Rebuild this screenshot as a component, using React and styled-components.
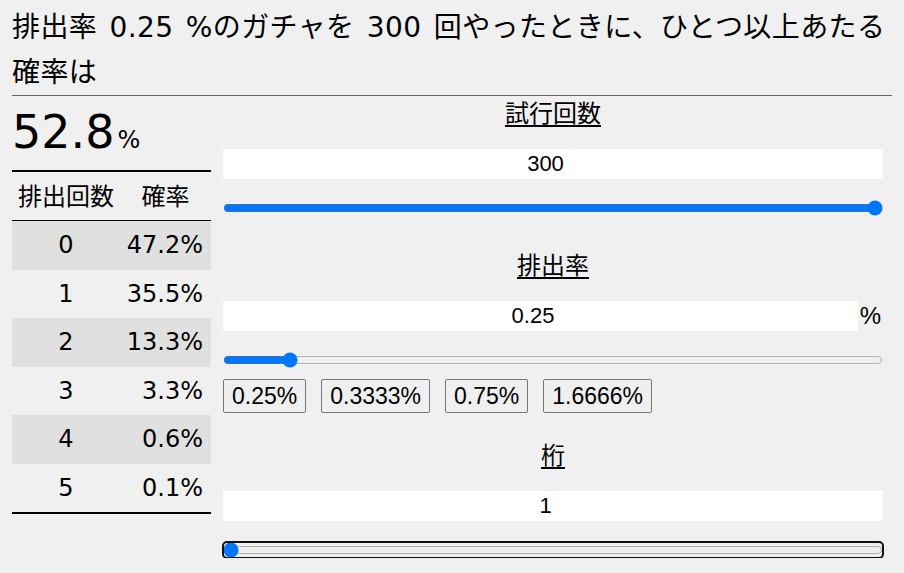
import React, { useState } from 'react';
import styled, { createGlobalStyle } from 'styled-components';

const GlobalStyle = createGlobalStyle`
    body {
        margin: 0;
        background-color: #f0f0f0;
        color: #000;
        font-family: "DejaVu Sans", "Noto Sans CJK JP", sans-serif;
    }
`;

const Page = styled.div`
    padding: 5px 12px 0;
`;

const Title = styled.h1`
    margin: 0;
    font-size: 28px;
    font-weight: normal;
    line-height: 45px;
    letter-spacing: 0.4px;
    word-spacing: 3px;
    white-space: nowrap;
    border-bottom: 1px solid #666;
`;

const Main = styled.div`
    display: flex;
    gap: 12px;
`;

const Left = styled.div`
    width: 199px;
    flex-shrink: 0;
`;

const Big = styled.div`
    margin: 6px 0 8px;
    height: 60px;
    font-size: 46px;
    line-height: 60px;
`;

const BigUnit = styled.span`
    margin-left: 3px;
    font-size: 24px;
`;

const Table = styled.div`
    border-top: 2px solid #000;
    border-bottom: 2px solid #000;
    font-size: 24px;
`;

const HeadRow = styled.div`
    display: grid;
    grid-template-columns: 108px 1fr;
    height: 49px;
    align-items: center;
    padding-bottom: 4px;
    box-sizing: border-box;
    border-bottom: 1px solid #000;
    text-align: center;
`;

const Row = styled.div`
    display: grid;
    grid-template-columns: 108px 1fr;
    height: 48.5px;
    align-items: center;
    background-color: ${({ $shaded }) => ($shaded ? '#e0e0e0' : 'transparent')};
`;

const Count = styled.div`
    text-align: center;
`;

const Rate = styled.div`
    text-align: right;
    padding-right: 8px;
`;

const Right = styled.div`
    width: 660px;
    padding-top: 2px;
`;

const Section = styled.div`
    display: flex;
    flex-direction: column;
    padding-bottom: ${({ $space }) => $space}px;
`;

const Label = styled.label`
    align-self: center;
    font-size: 24px;
    line-height: 32px;
    text-decoration: underline;
    text-decoration-thickness: 2px;
    text-underline-offset: 3px;
`;

const InputRow = styled.div`
    display: flex;
    align-items: center;
    margin-top: 19px;
`;

const NumberInput = styled.input`
    flex: 1;
    min-width: 0;
    height: 30px;
    box-sizing: border-box;
    border: none;
    padding: 0;
    outline: none;
    background-color: #fff;
    text-align: center;
    font-family: "Liberation Sans", Arial, sans-serif;
    font-size: 22px;
    color: #000;
`;

const Unit = styled.span`
    width: 25px;
    text-align: center;
    font-family: "Liberation Sans", Arial, sans-serif;
    font-size: 24px;
`;

const Slider = styled.input`
    display: block;
    width: 100%;
    height: 16px;
    margin: 21px 0 0;
    border-radius: 4px;
    outline: ${({ $focused }) => ($focused ? '2px solid #101010' : 'none')};
    outline-offset: -1px;
`;

const Presets = styled.div`
    display: flex;
    gap: 15px;
    margin-top: 11px;
`;

const Preset = styled.button`
    height: 34px;
    padding: 0 8px;
    border: 1px solid #767676;
    border-radius: 2px;
    background-color: #efefef;
    font-family: "Liberation Sans", Arial, sans-serif;
    font-size: 23px;
    color: #000;
`;

function binom(n, p) {
    // 0..5 回あたる確率
    const rows = [];
    let logC = 0;
    for (let k = 0; k <= 5; k++) {
        if (k > 0) logC += Math.log(n - k + 1) - Math.log(k);
        rows.push(Math.exp(logC + k * Math.log(p) + (n - k) * Math.log(1 - p)));
    }
    return rows;
}

export default function App() {
    const [trials, setTrials] = useState(300);
    const [rate, setRate] = useState(0.25);
    const [digits, setDigits] = useState(1);

    const p = rate / 100;
    const rows = binom(trials, p);
    const atLeastOne = (1 - rows[0]) * 100;
    const fmt = (v) => (v * 100).toFixed(digits) + '%';

    return (
        <Page>
            <GlobalStyle />
            <Title>
                排出率 {rate} %のガチャを {trials} 回やったときに、ひとつ以上あたる<br />確率は
            </Title>
            <Main>
                <Left>
                    <Big>
                        {atLeastOne.toFixed(digits)}
                        <BigUnit>%</BigUnit>
                    </Big>
                    <Table>
                        <HeadRow>
                            <div>排出回数</div>
                            <div>確率</div>
                        </HeadRow>
                        {rows.map((v, i) => (
                            <Row key={i} $shaded={i % 2 === 0}>
                                <Count>{i}</Count>
                                <Rate>{fmt(v)}</Rate>
                            </Row>
                        ))}
                    </Table>
                </Left>
                <Right>
                    <Section $space={34}>
                        <Label htmlFor="trials">試行回数</Label>
                        <InputRow>
                            <NumberInput id="trials" type="number" value={trials} onChange={(e) => setTrials(Number(e.target.value) || 0)} />
                        </InputRow>
                        <Slider type="range" min={1} max={300} value={trials} onChange={(e) => setTrials(Number(e.target.value))} />
                    </Section>
                    <Section $space={27}>
                        <Label htmlFor="rate">排出率</Label>
                        <InputRow>
                            <NumberInput id="rate" type="number" step="0.01" value={rate} onChange={(e) => setRate(Number(e.target.value) || 0)} />
                            <Unit>%</Unit>
                        </InputRow>
                        <Slider type="range" min={0} max={2.75} step={0.01} value={rate} onChange={(e) => setRate(Number(e.target.value))} />
                        <Presets>
                            {['0.25', '0.3333', '0.75', '1.6666'].map((r) => (
                                <Preset key={r} onClick={() => setRate(Number(r))}>{r}%</Preset>
                            ))}
                        </Presets>
                    </Section>
                    <Section $space={0}>
                        <Label htmlFor="digits">桁</Label>
                        <InputRow>
                            <NumberInput id="digits" type="number" value={digits} onChange={(e) => setDigits(Number(e.target.value) || 0)} />
                        </InputRow>
                        <Slider $focused type="range" min={1} max={10} value={digits} onChange={(e) => setDigits(Number(e.target.value))} />
                    </Section>
                </Right>
            </Main>
        </Page>
    );
}
